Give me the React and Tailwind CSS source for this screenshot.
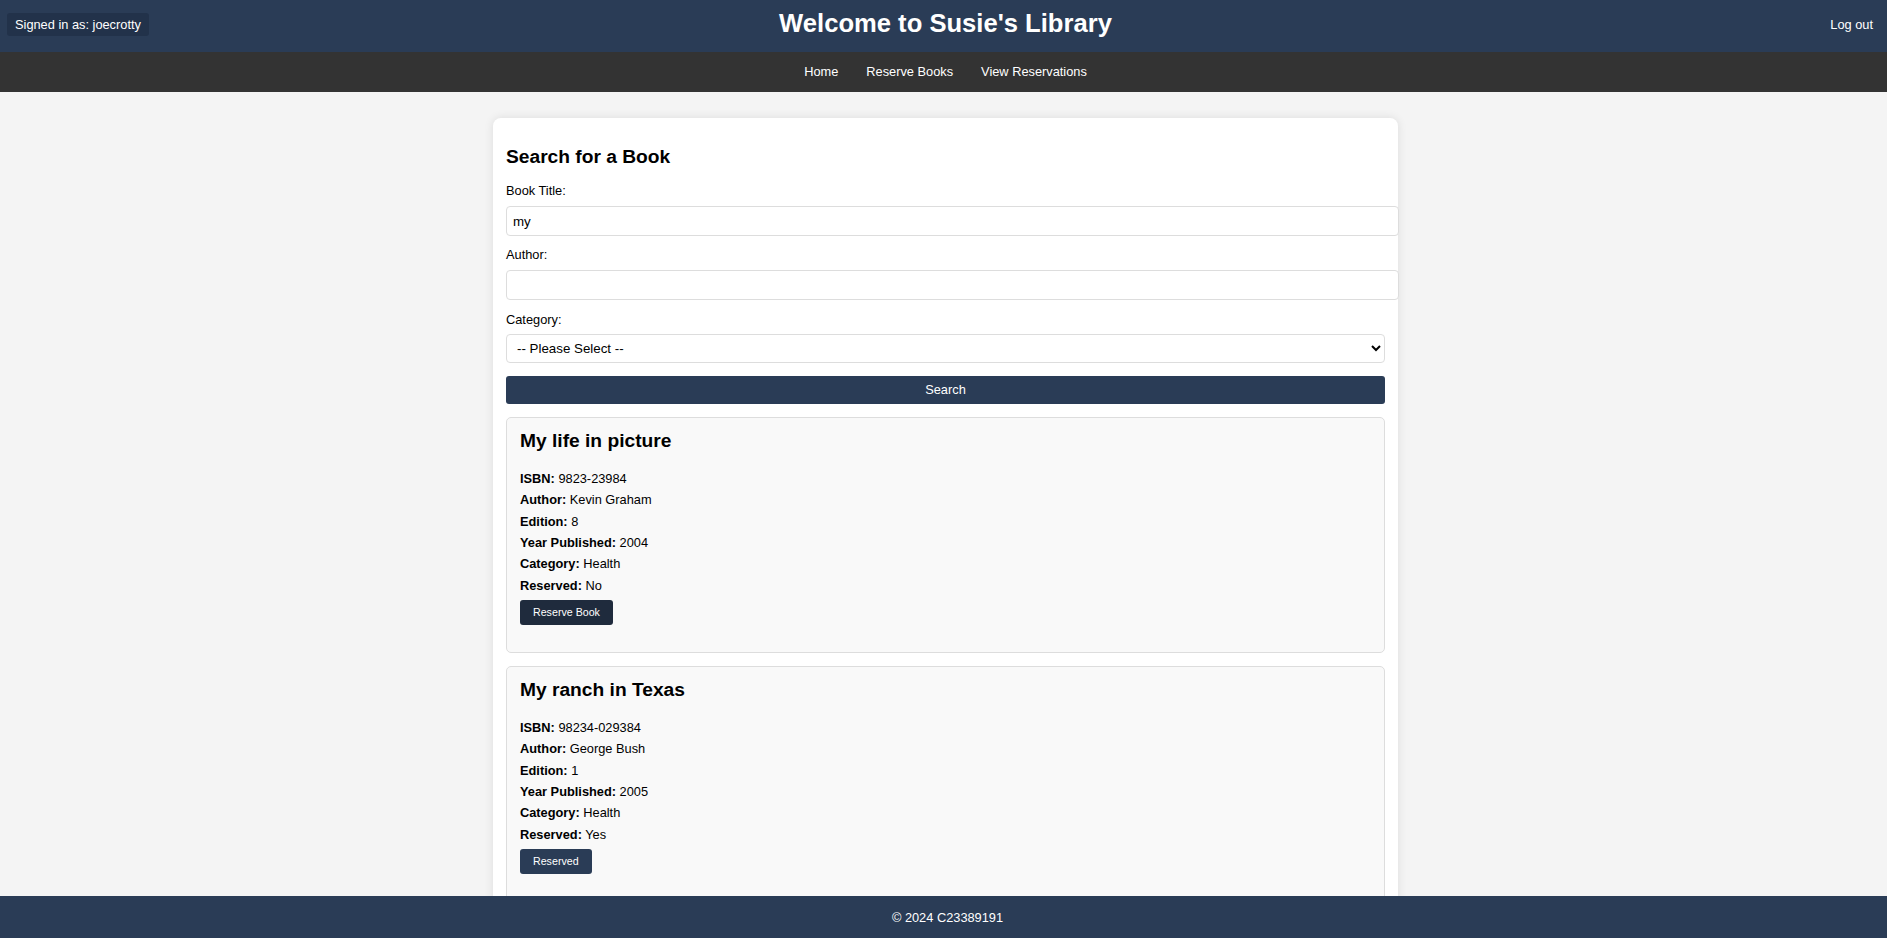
import React from "react";

const books = [
  {
    title: "My life in picture",
    isbn: "9823-23984",
    author: "Kevin Graham",
    edition: "8",
    year: "2004",
    category: "Health",
    reserved: false,
  },
  {
    title: "My ranch in Texas",
    isbn: "98234-029384",
    author: "George Bush",
    edition: "1",
    year: "2005",
    category: "Health",
    reserved: true,
  },
];

function Detail({ label, value }) {
  return (
    <p className="leading-[21.33px]">
      <b>{label}:</b> {value}
    </p>
  );
}

function BookCard({ book }) {
  return (
    <div className="mt-[13px] rounded-[5px] border border-[#dddddd] bg-[#f9f9f9] px-[13px] pt-[12px] pb-[27px]">
      <h3 className="text-[19.2px] font-bold leading-[22px]">{book.title}</h3>
      <div className="mt-[16px]">
        <Detail label="ISBN" value={book.isbn} />
        <Detail label="Author" value={book.author} />
        <Detail label="Edition" value={book.edition} />
        <Detail label="Year Published" value={book.year} />
        <Detail label="Category" value={book.category} />
        <Detail label="Reserved" value={book.reserved ? "Yes" : "No"} />
      </div>
      {book.reserved ? (
        <button className="mt-[4px] h-[25px] rounded-[3px] bg-[#2a3c56] px-[13px] text-[10.67px] text-white">
          Reserved
        </button>
      ) : (
        <button className="mt-[4px] h-[25px] rounded-[3px] bg-[#1f2b3d] px-[13px] text-[10.67px] text-white">
          Reserve Book
        </button>
      )}
    </div>
  );
}

export default function App() {
  return (
    <div className="flex h-screen flex-col overflow-hidden bg-[#f4f4f4] font-['Liberation_Sans',Arial,sans-serif] text-[12.8px] text-black">
      {/* Header */}
      <header className="flex h-[52px] shrink-0 items-center justify-between bg-[#2a3c56] px-[7px] text-white">
        <div className="w-[304px] pb-[3px]">
          <span className="inline-block rounded-[3px] bg-[#22324a] px-[8px] py-[4px] leading-[15px]">
            Signed in as: joecrotty
          </span>
        </div>
        <h1 className="pb-[5px] text-[25.6px] font-bold">Welcome to Susie's Library</h1>
        <div className="flex w-[300px] justify-end pr-[7px]">
          <a href="#" className="pb-[2px]">Log out</a>
        </div>
      </header>

      {/* Nav */}
      <nav className="flex h-[40px] shrink-0 items-center justify-center gap-[28px] bg-[#333333] pl-[4px] text-white">
        <a href="#">Home</a>
        <a href="#">Reserve Books</a>
        <a href="#">View Reservations</a>
      </nav>

      {/* Main */}
      <main className="min-h-0 flex-1 overflow-hidden pl-[4px]">
        <div className="mx-auto mt-[26px] w-[905px] rounded-[8px] bg-white px-[13px] pt-[28px] pb-[20px] shadow-[0_0_10px_rgba(0,0,0,0.1)]">
          <h3 className="text-[19.2px] font-bold leading-[22px]">Search for a Book</h3>

          <label className="mt-[15px] block leading-[16px]">Book Title:</label>
          <input
            type="text"
            defaultValue="my"
            className="mt-[7px] block h-[30px] w-[893px] rounded-[4px] border border-[#dddddd] bg-white px-[6px] text-[13.33px] outline-none"
          />

          <label className="mt-[11px] block leading-[16px]">Author:</label>
          <input
            type="text"
            className="mt-[7px] block h-[30px] w-[893px] rounded-[4px] border border-[#dddddd] bg-white px-[6px] text-[13.33px] outline-none"
          />

          <label className="mt-[12px] block leading-[16px]">Category:</label>
          <select className="mt-[6px] block h-[29px] w-full rounded-[4px] border border-[#dddddd] bg-white px-[6px] text-[13.33px] outline-none">
            <option>-- Please Select --</option>
          </select>

          <button className="mt-[13px] block h-[28px] w-full rounded-[3px] bg-[#2a3c56] text-[12.8px] text-white">
            Search
          </button>

          {books.map((b) => (
            <BookCard key={b.isbn} book={b} />
          ))}
        </div>
      </main>

      {/* Footer */}
      <footer className="flex h-[42px] shrink-0 items-center justify-center bg-[#2a3c56] pt-[2px] pl-[8px] text-white">
        <p>© 2024 C23389191</p>
      </footer>
    </div>
  );
}
